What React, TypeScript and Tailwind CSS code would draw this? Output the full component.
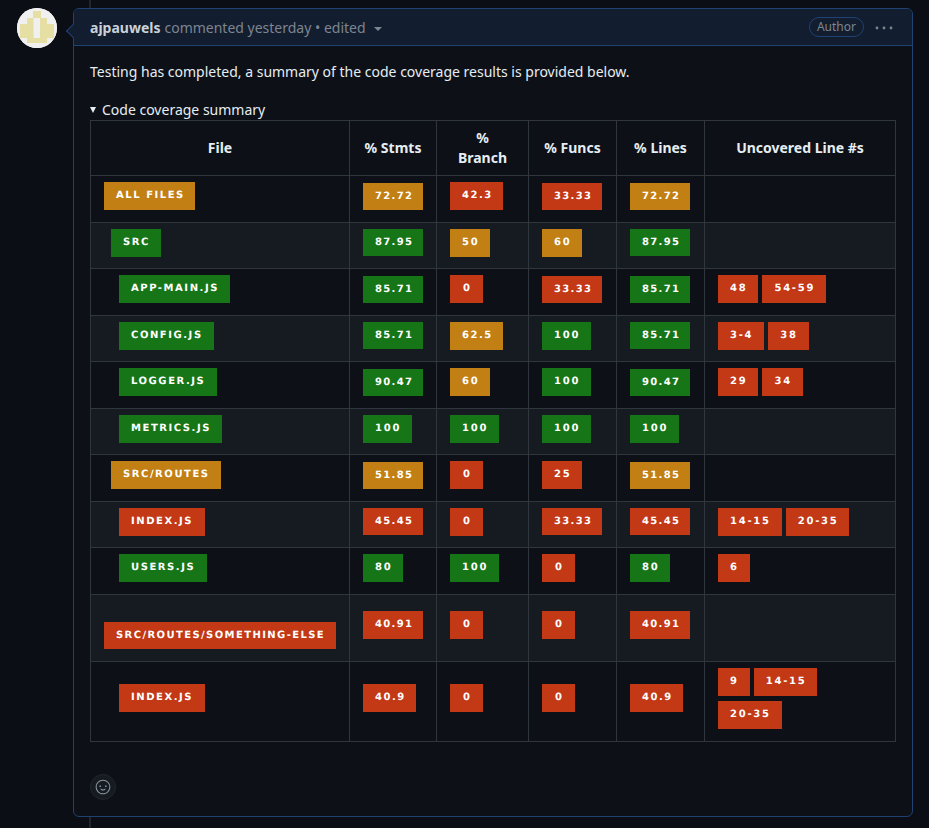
import { GoSmiley } from "react-icons/go";

type Tone = "g" | "o" | "r";
type Cell = [string, Tone];

const TONES: Record<Tone, string> = {
  g: "bg-[#167617]",
  o: "bg-[#c27f14]",
  r: "bg-[#c33815]",
};

type Row = {
  file: Cell;
  indent: string;
  stmts: Cell;
  branch: Cell;
  funcs: Cell;
  lines: Cell;
  uncovered?: string[];
};

const ROWS: Row[] = [
  { file: ["ALL FILES", "o"], indent: "pl-[13px]", stmts: ["72.72", "o"], branch: ["42.3", "r"], funcs: ["33.33", "r"], lines: ["72.72", "o"] },
  { file: ["SRC", "g"], indent: "pl-5", stmts: ["87.95", "g"], branch: ["50", "o"], funcs: ["60", "o"], lines: ["87.95", "g"] },
  { file: ["APP-MAIN.JS", "g"], indent: "pl-7", stmts: ["85.71", "g"], branch: ["0", "r"], funcs: ["33.33", "r"], lines: ["85.71", "g"], uncovered: ["48", "54-59"] },
  { file: ["CONFIG.JS", "g"], indent: "pl-7", stmts: ["85.71", "g"], branch: ["62.5", "o"], funcs: ["100", "g"], lines: ["85.71", "g"], uncovered: ["3-4", "38"] },
  { file: ["LOGGER.JS", "g"], indent: "pl-7", stmts: ["90.47", "g"], branch: ["60", "o"], funcs: ["100", "g"], lines: ["90.47", "g"], uncovered: ["29", "34"] },
  { file: ["METRICS.JS", "g"], indent: "pl-7", stmts: ["100", "g"], branch: ["100", "g"], funcs: ["100", "g"], lines: ["100", "g"] },
  { file: ["SRC/ROUTES", "o"], indent: "pl-5", stmts: ["51.85", "o"], branch: ["0", "r"], funcs: ["25", "r"], lines: ["51.85", "o"] },
  { file: ["INDEX.JS", "r"], indent: "pl-7", stmts: ["45.45", "r"], branch: ["0", "r"], funcs: ["33.33", "r"], lines: ["45.45", "r"], uncovered: ["14-15", "20-35"] },
  { file: ["USERS.JS", "g"], indent: "pl-7", stmts: ["80", "g"], branch: ["100", "g"], funcs: ["0", "r"], lines: ["80", "g"], uncovered: ["6"] },
];

// spacing differs a bit per kind of text in the reference badges
function spacing(text: string) {
  if (text === "0") return "pl-[13px] pr-3 tracking-[1.5px]";
  if (text === "ALL FILES") return "pl-3 pr-[10.5px] tracking-[1.55px]";
  if (/^\d+\.\d\d$/.test(text)) return "pl-3 pr-[9.65px] tracking-[1.35px]";
  if (/^\d+\.\d$/.test(text)) return "pl-3 pr-[10.3px] tracking-[1.5px]";
  if (/^[\d-]+$/.test(text)) return "pl-3 pr-[11px] tracking-[1.75px]";
  if (text.length > 20) return "pl-3 pr-[10.5px] tracking-[1.4px]";
  return "pl-3 pr-[11.5px] tracking-[1.55px]";
}

function Badge({ cell, short }: { cell: Cell; short?: boolean }) {
  return (
    <span
      className={`inline-block align-top pt-[7px] text-[10px] leading-[14px] font-bold text-white whitespace-nowrap [text-rendering:geometricPrecision] font-['DejaVu_Sans',sans-serif] ${
        short ? "h-[27px]" : "h-7"
      } ${spacing(cell[0])} ${TONES[cell[1]]}`}
    >
      {cell[0]}
    </span>
  );
}

function Stat({ cell, odd }: { cell: Cell; odd: boolean }) {
  const short = /^\d+\.\d\d$/.test(cell[0]);
  return (
    <td className={`${TD} ${short && !odd ? "pt-[7px]" : "pt-[6px]"}`}>
      <Badge cell={cell} short={short} />
    </td>
  );
}

function Avatar() {
  return (
    <div className="w-10 h-10 rounded-full bg-[#f0f0f0] overflow-hidden shrink-0">
      <svg viewBox="0 0 40 40" className="w-10 h-10">
        <rect width="40" height="40" fill="#f0f0f0" />
        <rect x="16" y="3" width="8" height="8" fill="#e6dfa3" />
        <rect x="10" y="10" width="20" height="25" fill="#e6dfa3" />
        <rect x="3" y="16" width="34" height="14" fill="#e6dfa3" />
        <rect x="16.5" y="10" width="6.5" height="20" fill="#f0f0f0" />
      </svg>
    </div>
  );
}

const TH = "border border-[#30363d] text-center font-bold text-[14px] align-middle px-[13px]";
const TH1 = `${TH} leading-[21px] pb-[2px]`;
const TD = "border border-[#30363d] px-[13px] align-top whitespace-nowrap";

export default function App() {
  return (
    <div className="relative w-[929px] h-[828px] overflow-hidden bg-[#0b0e14] text-[#e6edf3] font-['Noto_Sans',sans-serif] text-[14px]">
      <div className="absolute left-[89px] top-0 bottom-0 w-[2px] bg-[#21262d]" />
      <div className="relative flex items-start pt-2 pl-[17px]">
        <Avatar />
        <div className="relative ml-4 w-[840px] h-[809px] border border-[#1f4273] rounded-md bg-[#0d1117]">
          <div className="absolute -left-[6px] top-[17px] w-[10px] h-[10px] rotate-45 bg-[#121d2f] border-l border-b border-[#1f4273]" />
          <div className="relative flex items-center h-[37px] pl-4 pr-4 bg-[#121d2f] border-b border-[#1f4273] rounded-t-md">
            <span className="font-bold text-[#c9d1d9]">ajpauwels</span>
            <span className="ml-1 text-[#7d8590]">commented yesterday • edited</span>
            <span className="ml-[8px] mt-[3px] w-0 h-0 border-x-[4px] border-x-transparent border-t-[4px] border-t-[#7d8590]" />
            <span className="ml-auto h-5 px-[7px] rounded-full border border-[#1f4273] text-[12px] leading-[18px] text-[#7d8590]">
              Author
            </span>
            <svg viewBox="0 0 18 6" className="ml-[11px] mr-[3px] mt-[1px] w-[18px] h-[6px] text-[#7d8590]" fill="currentColor">
              <circle cx="2" cy="3" r="1.4" />
              <circle cx="9" cy="3" r="1.4" />
              <circle cx="16" cy="3" r="1.4" />
            </svg>
          </div>

          <div className="px-4">
            <p className="mt-[15px] leading-[21px] text-[#e6edf3]">
              Testing has completed, a summary of the code coverage results is provided below.
            </p>
            <div className="mt-[17px] h-[21px] leading-[21px] flex items-center">
              <span className="mr-[6px] w-0 h-0 border-x-[3.5px] border-x-transparent border-t-[6px] border-t-[#e6edf3]" />
              Code coverage summary
            </div>

            <table className="border-collapse table-fixed w-[805px]">
              <colgroup>
                <col className="w-[259px]" />
                <col className="w-[87px]" />
                <col className="w-[92px]" />
                <col className="w-[88px]" />
                <col className="w-[88px]" />
                <col className="w-[191px]" />
              </colgroup>
              <thead>
                <tr className="h-[55px]">
                  <th className={TH1}>File</th>
                  <th className={TH1}>% Stmts</th>
                  <th className={`${TH} leading-[20px]`}>
                    %<br />
                    Branch
                  </th>
                  <th className={TH1}>% Funcs</th>
                  <th className={TH1}>% Lines</th>
                  <th className={TH1}>Uncovered Line #s</th>
                </tr>
              </thead>
              <tbody>
                {ROWS.map((r, i) => {
                  const odd = i % 2 === 1;
                  return (
                    <tr key={i} className={odd ? "h-[46px] bg-[#161b22]" : "h-[47px]"}>
                      <td className={`${TD} ${r.indent} pt-[6px]`}>
                        <Badge cell={r.file} />
                      </td>
                      <Stat cell={r.stmts} odd={odd} />
                      <Stat cell={r.branch} odd={odd} />
                      <Stat cell={r.funcs} odd={odd} />
                      <Stat cell={r.lines} odd={odd} />
                      <td className={`${TD} pt-[6px]`}>
                        <div className="flex gap-1">
                          {r.uncovered?.map((u) => (
                            <Badge key={u} cell={[u, "r"]} />
                          ))}
                        </div>
                      </td>
                    </tr>
                  );
                })}
                <tr className="h-[67px] bg-[#161b22]">
                  <td className={`${TD} pl-[13px] pt-[27px]`}>
                    <Badge cell={["SRC/ROUTES/SOMETHING-ELSE", "r"]} short />
                  </td>
                  <td className={`${TD} pt-[16px]`}>
                    <Badge cell={["40.91", "r"]} />
                  </td>
                  <td className={`${TD} pt-[16px]`}>
                    <Badge cell={["0", "r"]} />
                  </td>
                  <td className={`${TD} pt-[16px]`}>
                    <Badge cell={["0", "r"]} />
                  </td>
                  <td className={`${TD} pt-[16px]`}>
                    <Badge cell={["40.91", "r"]} />
                  </td>
                  <td className={TD} />
                </tr>
                <tr className="h-[80px]">
                  <td className={`${TD} pl-7 pt-[22px]`}>
                    <Badge cell={["INDEX.JS", "r"]} />
                  </td>
                  <td className={`${TD} pt-[22px]`}>
                    <Badge cell={["40.9", "r"]} />
                  </td>
                  <td className={`${TD} pt-[22px]`}>
                    <Badge cell={["0", "r"]} />
                  </td>
                  <td className={`${TD} pt-[22px]`}>
                    <Badge cell={["0", "r"]} />
                  </td>
                  <td className={`${TD} pt-[22px]`}>
                    <Badge cell={["40.9", "r"]} />
                  </td>
                  <td className={`${TD} pt-[6px]`}>
                    <div className="flex flex-wrap gap-x-1 gap-y-[5px] w-[110px]">
                      <Badge cell={["9", "r"]} />
                      <Badge cell={["14-15", "r"]} />
                      <Badge cell={["20-35", "r"]} />
                    </div>
                  </td>
                </tr>
              </tbody>
            </table>

            <button className="mt-8 flex items-center justify-center w-[26px] h-[26px] rounded-full bg-[#161b22] border border-[#21262d] text-[#8b949e]">
              <GoSmiley className="w-4 h-4" />
            </button>
          </div>
        </div>
      </div>
    </div>
  );
}
